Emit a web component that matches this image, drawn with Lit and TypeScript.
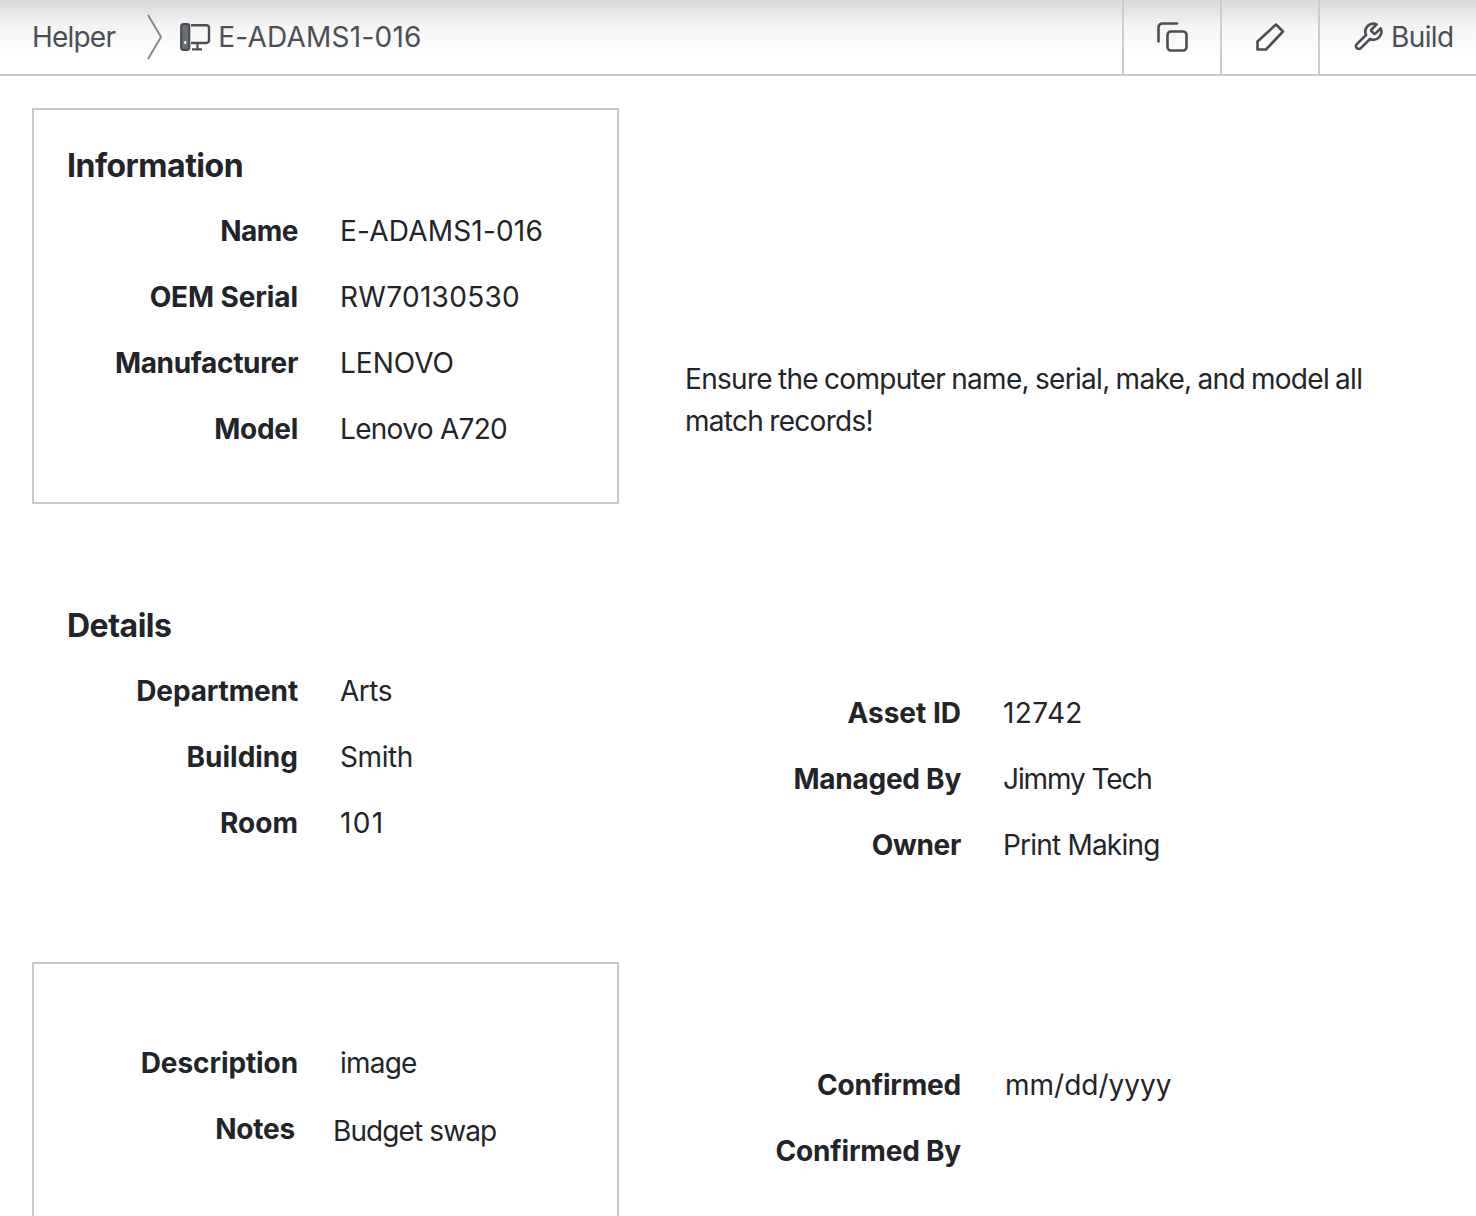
import { LitElement, html, css } from "lit";
import { customElement } from "lit/decorators.js";

/** label, value, value tracking (px), label tracking (px) */
type Row = [string, string, number, number?];

@customElement("app-root")
export class AppRoot extends LitElement {
  static styles = css`
    :host {
      display: block;
      height: 1216px;
      overflow: hidden;
      background: #fff;
      font-family: Inter, "Liberation Sans", sans-serif;
      font-size: 28px;
      line-height: 42px;
      color: #212529;
    }
    .bar {
      display: flex;
      align-items: stretch;
      height: 74px;
      border-bottom: 2px solid #ccc;
      background: linear-gradient(#d9d9d9 0, #f4f4f4 26px, #fff 56px);
      color: #4a4f55;
    }
    .crumbs { flex: 1; display: flex; align-items: center; padding-left: 32px; }
    .helper { letter-spacing: -0.8px; }
    .title { letter-spacing: 0.25px; }
    .chev { width: 16px; height: 46px; margin: 0 17px 0 32px; flex: none; }
    .pc { width: 32px; height: 30px; margin-right: 6px; flex: none; }
    .btn {
      display: flex;
      align-items: center;
      justify-content: center;
      width: 96px;
      border-left: 2px solid #ccc;
    }
    .btn.build { width: 158px; justify-content: flex-start; padding-left: 32px; box-sizing: border-box; }
    .btn svg { width: 32px; height: 32px; flex: none; }
    .build svg { margin-right: 7px; }
    .build span { letter-spacing: -0.6px; }
    .content { padding: 32px 32px 0; display: flex; flex-direction: column; gap: 64px; }
    .section { display: grid; grid-template-columns: 587px 1fr; column-gap: 33px; }
    .card { border: 2px solid transparent; padding: 35px 32px 52px; }
    .card.boxed { border-color: #c8c8c8; }
    .card.last { height: 400px; padding-top: 78px; }
    h2 { margin: 0 0 23px 1px; font-size: 32px; line-height: 42px; font-weight: 700; letter-spacing: -0.5px; }
    .rows { display: grid; grid-template-columns: 232px 1fr; column-gap: 42px; row-gap: 24px; }
    .k { font-weight: 700; text-align: right; }
    .side { padding-left: 34px; }
    .side .rows { padding-left: 43px; }
    .side.note { padding: 250px 32px 0 33px; letter-spacing: -0.7px; word-spacing: -1.1px; }
    .side.s2 { padding-top: 124px; }
    .side.s3 { padding-top: 102px; }
    .notes-k { margin-right: 3px; letter-spacing: -0.2px; }
    .notes-v { margin-left: -7px; margin-top: 2px; letter-spacing: -0.9px; }
    .desc { letter-spacing: -0.1px; }
    .image { letter-spacing: -0.8px; }
    .date { margin-left: 2px; }
    .cb { letter-spacing: -0.2px; }
  `;

  private rows(items: Row[]) {
    return html`<div class="rows">
      ${items.map(
        ([k, v, vt, kt = -0.15]) => html`<div class="k" style="letter-spacing:${kt}px">${k}</div><div style="letter-spacing:${vt}px">${v}</div>`
      )}
    </div>`;
  }

  render() {
    return html`
      <div class="bar">
        <div class="crumbs">
          <span class="helper">Helper</span>
          <svg class="chev" viewBox="0 0 16 46" fill="none" stroke="#8a8a8a" stroke-width="2">
            <path d="M1 1 14 23 1 45" />
          </svg>
          <svg class="pc" viewBox="0 0 32 30" fill="none" stroke="#4a4f55">
            <rect x="1.200" y="2.200" width="8" height="25.600" rx="2" fill="#6b6f74" stroke-width="2.200" />
            <rect x="4.300" y="19" width="2" height="3" fill="#fff" stroke="none" />
            <path d="M11 3.200h15.500a2.500 2.500 0 0 1 2.500 2.500v12.800a2.500 2.500 0 0 1-2.500 2.500H11" stroke-width="2.400" />
            <path d="M17.500 22v5M12 27.400h10" stroke-width="2.200" />
          </svg>
          <span class="title">E-ADAMS1-016</span>
        </div>
        <div class="btn">
          <svg viewBox="0 0 32 32" fill="none" stroke="#4a4f55" stroke-width="2.600" stroke-linecap="round" stroke-linejoin="round">
            <rect x="11.500" y="10.500" width="19" height="19" rx="3.500" />
            <path d="M21 2.500H6A4 4 0 0 0 2.500 6V20.500" />
          </svg>
        </div>
        <div class="btn">
          <svg viewBox="0 0 32 32" fill="none" stroke="#4a4f55" stroke-width="2.600" stroke-linejoin="round">
            <path d="M3.500 28.500V20.500L22 3.500 29 10.500 12 28.500Z" />
          </svg>
        </div>
        <div class="btn build">
          <svg viewBox="0 0 24 24" fill="none" stroke="#4a4f55" stroke-width="2" stroke-linecap="round" stroke-linejoin="round">
            <path d="M14.700 6.300a1 1 0 0 0 0 1.400l1.600 1.600a1 1 0 0 0 1.400 0l3.770-3.770a6 6 0 0 1-7.940 7.940l-6.910 6.910a2.120 2.120 0 0 1-3-3l6.910-6.910a6 6 0 0 1 7.940-7.940l-3.760 3.760z" />
          </svg>
          <span>Build</span>
        </div>
      </div>
      <div class="content">
        <section class="section">
          <div class="card boxed">
            <h2>Information</h2>
            ${this.rows([
              ["Name", "E-ADAMS1-016", 0.2, -0.5],
              ["OEM Serial", "RW70130530", 0.3, -0.1],
              ["Manufacturer", "LENOVO", 0, -0.33],
              ["Model", "Lenovo A720", -0.7, -0.3],
            ])}
          </div>
          <div class="side note">Ensure the computer name, serial, make, and model all match records!</div>
        </section>
        <section class="section">
          <div class="card">
            <h2>Details</h2>
            ${this.rows([
              ["Department", "Arts", -0.5],
              ["Building", "Smith", -0.4, 0],
              ["Room", "101", 1.4, 0],
            ])}
          </div>
          <div class="side s2">
            ${this.rows([
              ["Asset ID", "12742", 0.4, 0],
              ["Managed By", "Jimmy Tech", -1.1, -0.25],
              ["Owner", "Print Making", -0.8, -0.35],
            ])}
          </div>
        </section>
        <section class="section">
          <div class="card boxed last">
            <div class="rows">
              <div class="k desc">Description</div><div class="image">image</div>
              <div class="k notes-k">Notes</div><div class="notes-v">Budget swap</div>
            </div>
          </div>
          <div class="side s3">
            <div class="rows">
              <div class="k cb">Confirmed</div><div class="date">mm/dd/yyyy</div>
              <div class="k cb">Confirmed By</div><div></div>
            </div>
          </div>
        </section>
      </div>
    `;
  }
}
